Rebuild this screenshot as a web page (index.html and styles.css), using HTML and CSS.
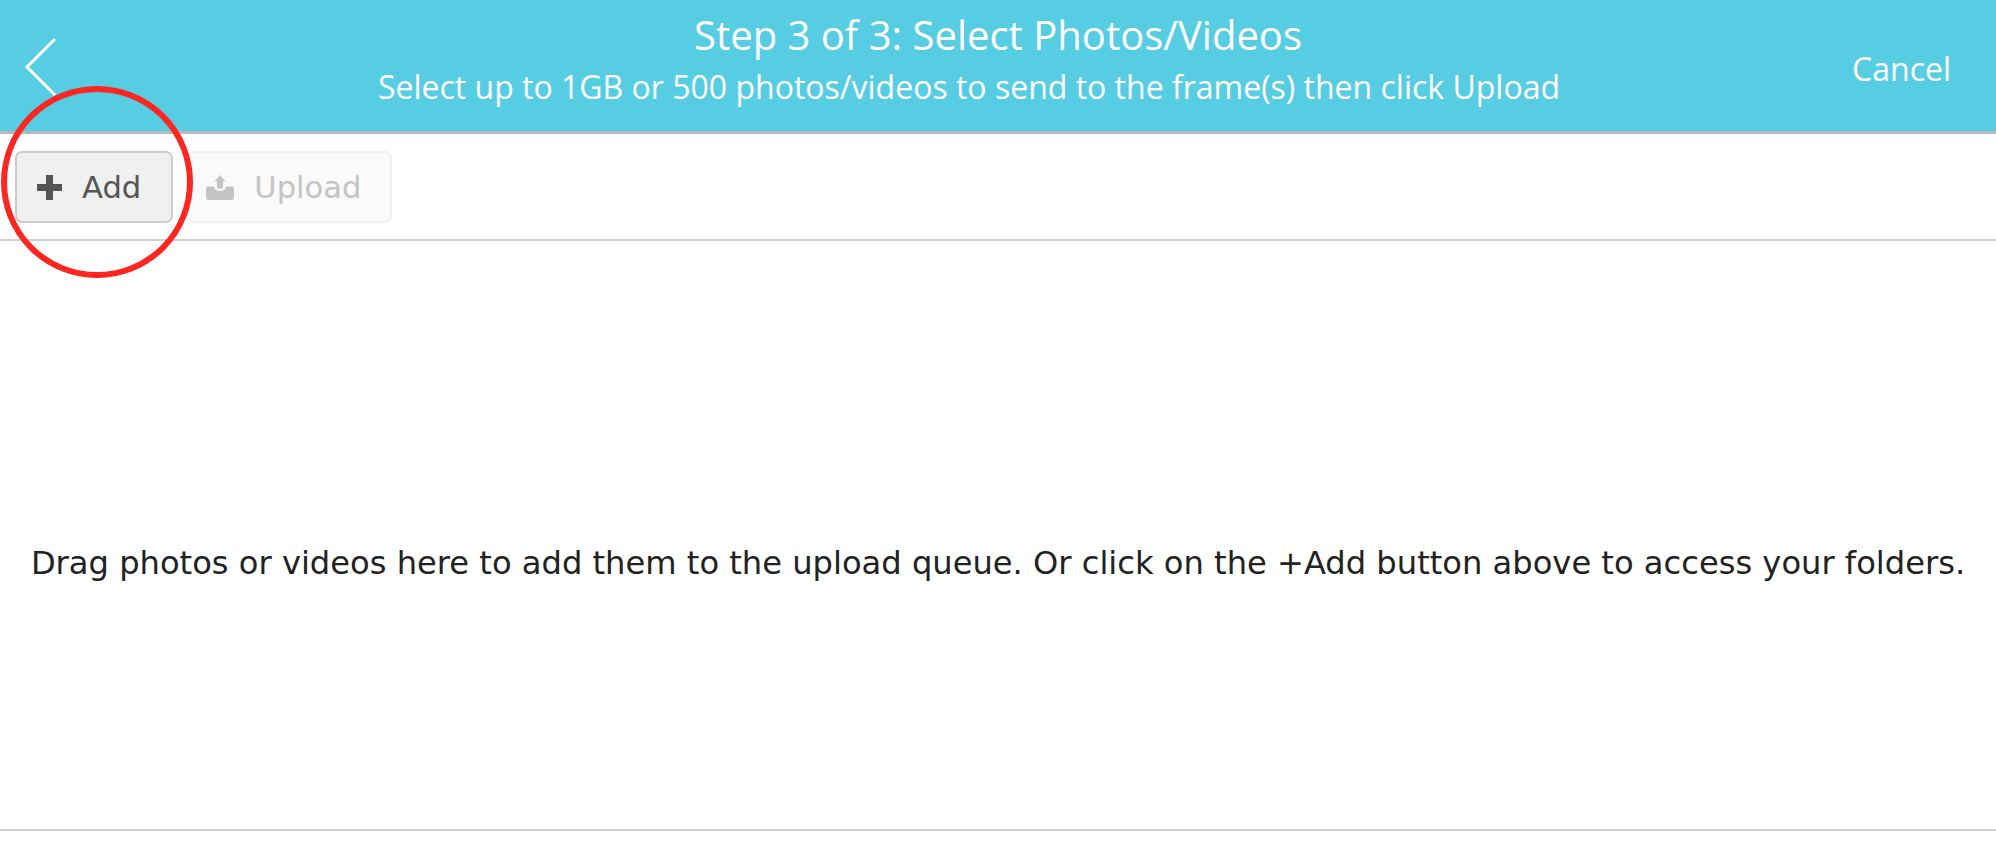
FILE: index.html
```html
<!DOCTYPE html>
<html lang="en">
<head>
  <title>Select Photos/Videos</title>
  <meta charset="utf-8">
  <link rel="stylesheet" href="styles.css">
</head>
<body>
  <header class="top-bar">
    <a class="back" href="#" aria-label="Back">
      <svg width="40" height="62" viewBox="0 0 40 62">
        <path d="M33 3 L5 31 L33 59" fill="none" stroke="#fff" stroke-width="3"/>
      </svg>
    </a>
    <div class="heading">
      <h1>Step 3 of 3: Select Photos/Videos</h1>
      <p>Select up to 1GB or 500 photos/videos to send to the frame(s) then click Upload</p>
    </div>
    <a class="cancel" href="#">Cancel</a>
  </header>

  <div class="toolbar">
    <button type="button" class="btn">
      <svg width="25" height="25" viewBox="0 0 25 25">
        <path d="M9 0 H16 V9 H25 V16 H16 V25 H9 V16 H0 V9 H9 Z" fill="#555"/>
      </svg>
      Add
    </button>
    <button type="button" class="btn btn-off" disabled>
      <svg width="28" height="25" viewBox="0 0 28 25">
        <path d="M14 0 L19.500 6.500 H17 V13.500 H11 V6.500 H8.500 Z" fill="#c4c4c4"/>
        <path d="M2 11.500 H8 A6 4.500 0 0 0 20 11.500 H26 A2 2 0 0 1 28 13.500 V23 A2 2 0 0 1 26 25 H2 A2 2 0 0 1 0 23 V13.500 A2 2 0 0 1 2 11.500 Z" fill="#c4c4c4"/>
      </svg>
      Upload
    </button>
  </div>

  <main class="drop-zone">
    <p>Drag photos or videos here to add them to the upload queue. Or click on the +Add button above to access your folders.</p>
  </main>

  <div class="ring"></div>
</body>
</html>
```

FILE: styles.css
```css
html, body
{
	height: 100%;
}
body
{
	margin: 0;
	background: #fff;
	font-family: "DejaVu Sans", sans-serif;
	overflow: hidden;
}
.top-bar
{
	display: grid;
	grid-template-columns: 300px 1fr 300px;
	align-items: center;
	height: 131px;
	background: #57cde3;
	border-bottom: 3px solid #b8b8b8;
	color: #fff;
	font-family: "Open Sans", sans-serif;
}
.back
{
	display: flex;
	padding-left: 22px;
	margin-top: 3px;
}
.heading
{
	align-self: start;
	padding-top: 10px;
	text-align: center;
}
.heading h1
{
	margin: 0;
	font-size: 40px;
	font-weight: 400;
	line-height: 50px;
}
.heading p
{
	margin: 0;
	padding: 1px 58px 0 0;
	font-size: 32px;
	line-height: 52px;
}
.cancel
{
	justify-self: end;
	padding: 5px 45px 0 0;
	color: #fff;
	font-size: 32px;
	text-decoration: none;
}
.toolbar
{
	display: flex;
	gap: 14px;
	padding: 17px 15px 16px;
	border-bottom: 2px solid #cfcfcf;
}
.btn
{
	display: flex;
	align-items: center;
	gap: 20px;
	height: 72px;
	padding: 0 30px 0 20px;
	background: #f0f0f0;
	border: 2px solid #cccccc;
	border-radius: 7px;
	color: #555;
	font-family: "DejaVu Sans", sans-serif;
	font-size: 30.6px;
}
.btn-off
{
	padding: 0 29px 0 17px;
	background: #fafafa;
	border-color: #f0f0f0;
	color: #c4c4c4;
}
.drop-zone
{
	display: flex;
	align-items: center;
	justify-content: center;
	box-sizing: border-box;
	height: 590px;
	padding-top: 56px;
	border-bottom: 2px solid #cfcfcf;
}
.drop-zone p
{
	margin: 0;
	color: #222;
	font-size: 32.15px;
	white-space: nowrap;
}
.ring
{
	position: absolute;
	left: 1px;
	top: 86px;
	box-sizing: border-box;
	width: 192px;
	height: 192px;
	border: 6px solid #fe2620;
	border-radius: 50%;
}
```
